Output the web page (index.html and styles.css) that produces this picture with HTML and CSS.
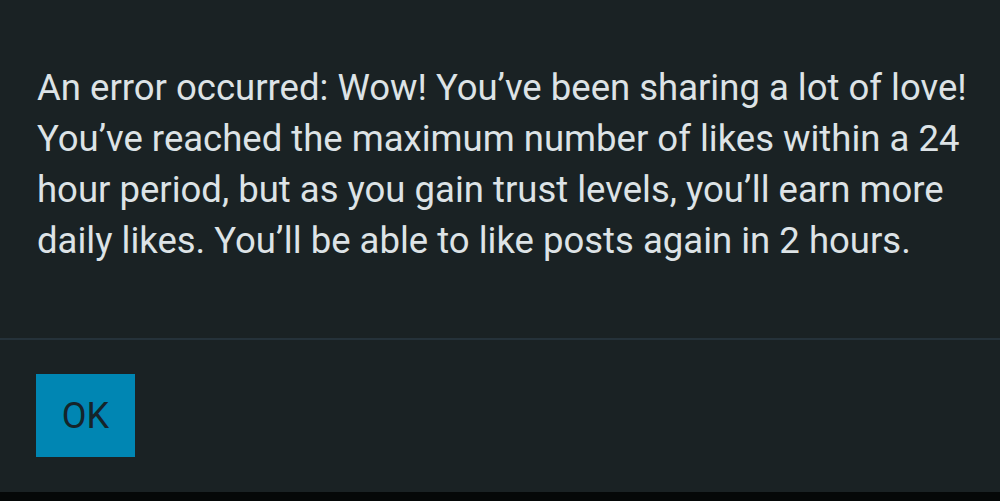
FILE: index.html
```html
<!DOCTYPE html>
<html lang="en">
<head>
    <meta charset="UTF-8">
    <title>Error</title>
    <link rel="stylesheet" href="styles.css">
</head>
<body>
    <div class="dialog">
        <div class="dialog-body">
            An error occurred: Wow! You’ve been sharing a lot of love! You’ve reached the maximum number of likes within a 24 hour period, but as you gain trust levels, you’ll earn more daily likes. You’ll be able to like posts again in 2 hours.
        </div>
        <div class="dialog-footer">
            <button class="btn-ok">OK</button>
        </div>
    </div>
    <div class="bottom-bar"></div>
</body>
</html>
```
FILE: styles.css
```css
* {
    margin: 0;
    padding: 0;
    box-sizing: border-box;
}

html, body {
    width: 1000px;
    height: 501px;
    overflow: hidden;
    background-color: #1a2224;
    font-family: Roboto, "Noto Sans", sans-serif;
}

.dialog {
    height: 492px;
    display: flex;
    flex-direction: column;
}

.dialog-body {
    padding: 62px 20px 0 37px;
    box-sizing: content-box;
    height: 276px;
    font-size: 36.5px;
    line-height: 51px;
    color: #dde3e6;
    border-bottom: 2px solid #25323a;
}

.dialog-footer {
    padding: 34px 36px 0;
}

.btn-ok {
    width: 99px;
    height: 83px;
    background-color: #0086b3;
    color: #15242a;
    font-family: Roboto, "Noto Sans", sans-serif;
    font-size: 36px;
    border: none;
}

.bottom-bar {
    height: 9px;
    background-color: #050808;
}
```
